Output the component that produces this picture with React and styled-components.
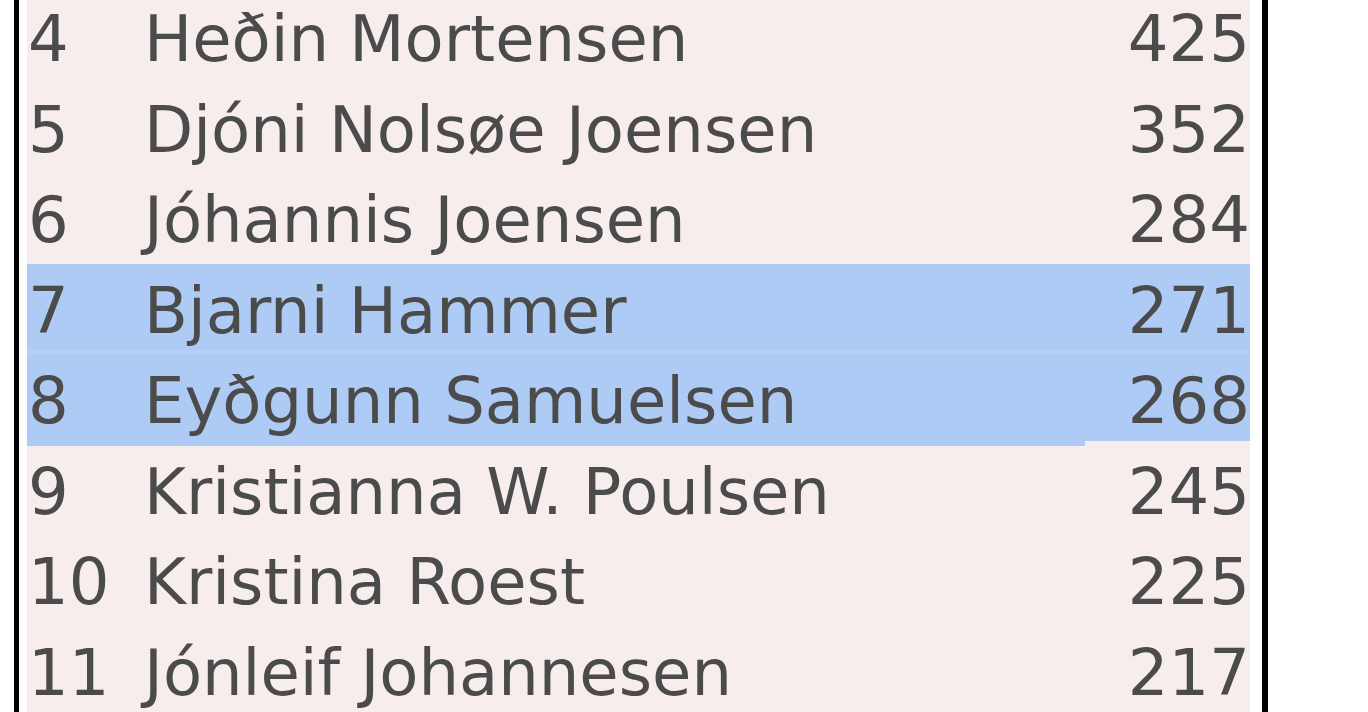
import React from "react";
import styled, { createGlobalStyle } from "styled-components";

const GlobalStyle = createGlobalStyle`
  html, body {
    margin: 0;
    padding: 0;
    background: #ffffff;
    overflow: hidden;
  }
`;

const Frame = styled.div`
  box-sizing: border-box;
  margin-left: 14px;
  width: 1254px;
  height: 712px;
  border-left: 5px solid #000;
  border-right: 6px solid #000;
  padding: 0 12px 0 8px;
  overflow: hidden;
`;

const Board = styled.div`
  display: flex;
  flex-direction: column;
  gap: 4px;
  margin-top: -8px;
  padding-bottom: 12px;
  background: #f7eded;
  font-family: "DejaVu Sans", Verdana, sans-serif;
  font-size: 64px;
  color: #4b4b4b;
`;

const Selection = styled.div`
  position: relative;
  display: flex;
  flex-direction: column;
  gap: 4px;
  background: #b6d1f8;

  &::after {
    content: "";
    position: absolute;
    left: 0;
    top: 100%;
    width: 1058px;
    height: 5px;
    background: #aecbf5;
  }
`;

const Row = styled.div`
  display: grid;
  grid-template-columns: 115px 1fr 123px;
  column-gap: 2px;
  height: 86.5px;
  background: ${(p) => (p.$picked ? "#aecbf5" : "transparent")};
`;

const Cell = styled.div`
  padding-top: 10px;
  line-height: 74.5px;
  white-space: nowrap;
  text-align: ${(p) => (p.$right ? "right" : "left")};
  padding-left: ${(p) => (p.$rank ? "1px" : "0")};
`;

const rows = [
  [4, "Heðin Mortensen", 425],
  [5, "Djóni Nolsøe Joensen", 352],
  [6, "Jóhannis Joensen", 284],
  [7, "Bjarni Hammer", 271],
  [8, "Eyðgunn Samuelsen", 268],
  [9, "Kristianna W. Poulsen", 245],
  [10, "Kristina Roest", 225],
  [11, "Jónleif Johannesen", 217],
];

function Line({ item, picked }) {
  const [rank, name, votes] = item;
  return (
    <Row $picked={picked}>
      <Cell $rank>{rank}</Cell>
      <Cell>{name}</Cell>
      <Cell $right>{votes}</Cell>
    </Row>
  );
}

export default function App() {
  const before = rows.slice(0, 3);
  const picked = rows.slice(3, 5);
  const after = rows.slice(5);

  return (
    <>
      <GlobalStyle />
      <Frame>
        <Board>
          {before.map((r) => (
            <Line key={r[0]} item={r} />
          ))}
          <Selection>
            {picked.map((r) => (
              <Line key={r[0]} item={r} picked />
            ))}
          </Selection>
          {after.map((r) => (
            <Line key={r[0]} item={r} />
          ))}
        </Board>
      </Frame>
    </>
  );
}
